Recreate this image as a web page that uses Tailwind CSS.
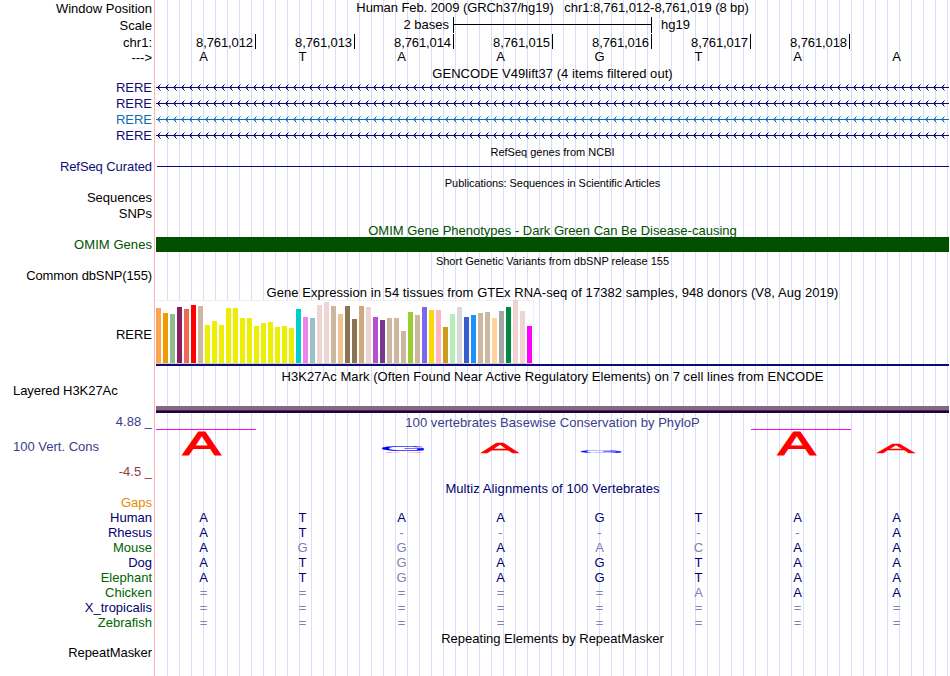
<!DOCTYPE html>
<html lang="en">
<head>
  <meta charset="UTF-8" />
  <meta name="viewport" content="width=device-width, initial-scale=1.0" />
  <title>Genome Browser - chr1:8,761,012-8,761,019</title>
  <script src="https://cdn.jsdelivr.net/npm/@tailwindcss/browser@4"></script>
</head>
<body class="bg-white text-black w-[950px] h-[676px] overflow-hidden font-['Liberation_Sans',Arial,sans-serif] text-[13px] leading-[15px]">
  <div class="flex h-full">

    <!-- Labels -->
    <div class="w-[155px] shrink-0 border-r border-[#ffb4b4] pr-[2px] flex flex-col text-right">
      <div class="h-[17px] pt-px">Window Position</div>
      <div class="h-[17px] pt-px">Scale</div>
      <div class="h-4 pt-px">chr1:</div>
      <div class="h-[30px]">---&gt;</div>
      <div class="h-4 text-[#0c0c78]">RERE</div>
      <div class="h-4 text-[#0c0c78]">RERE</div>
      <div class="h-4 text-[#0c6cb4]">RERE</div>
      <div class="h-[31px] text-[#0c0c78]">RERE</div>
      <div class="h-[31px] text-[#0c0c78] tracking-[-0.08px]">RefSeq Curated</div>
      <div class="h-4">Sequences</div>
      <div class="h-[31px]">SNPs</div>
      <div class="h-[31px] text-[#005000] tracking-[0.06px]">OMIM Genes</div>
      <div class="h-8 tracking-[-0.12px]">Common dbSNP(155)</div>
      <div class="h-[83px] pt-[27px]">RERE</div>
      <div class="h-[31px] pl-[13px] text-left tracking-[-0.06px]">Layered H3K27Ac</div>
      <div class="h-[25px] text-[#3c3c8c]">4.88 _</div>
      <div class="h-[25px] pl-[13px] text-left text-[#3c3c8c]">100 Vert. Cons</div>
      <div class="h-[31px] text-[#8c3c3c]">-4.5 _</div>
      <div class="h-[15px] text-[#e68a00]">Gaps</div>
      <div class="h-[15px] text-[#00006e]">Human</div>
      <div class="h-[15px] text-[#00006e]">Rhesus</div>
      <div class="h-[15px] text-[#006400]">Mouse</div>
      <div class="h-[15px] text-[#00006e]">Dog</div>
      <div class="h-[15px] text-[#006400]">Elephant</div>
      <div class="h-[15px] text-[#006400]">Chicken</div>
      <div class="h-[15px] text-[#00006e]">X_tropicalis</div>
      <div class="h-[30px] text-[#006400]">Zebrafish</div>
      <div class="h-[15px] tracking-[-0.06px]">RepeatMasker</div>
    </div>

    <!-- Tracks -->
    <div class="ml-px w-[793px] flex flex-col text-center bg-[repeating-linear-gradient(to_right,transparent_0px,transparent_11px,#dcdcfa_11px,#dcdcfa_12px)]">
      <div class="h-[17px] whitespace-pre tracking-[-0.07px]">Human Feb. 2009 (GRCh37/hg19)   chr1:8,761,012-8,761,019 (8 bp)</div>

      <div class="h-[17px] w-[792px] grid grid-cols-8">
        <div class="col-span-3 text-right pr-1">2 bases</div>
        <div class="col-span-2 h-4 border-l border-black pt-[7px]"><div class="h-px bg-black"></div></div>
        <div class="col-span-3 h-4 border-l border-black pl-[9px] text-left">hg19</div>
      </div>

      <div class="h-4 w-[792px] grid grid-cols-8 text-right tracking-[-0.1px] *:h-[15px] *:pr-[2px] *:pt-px">
        <div>8,761,012</div>
        <div class="border-l border-black">8,761,013</div>
        <div class="border-l border-black">8,761,014</div>
        <div class="border-l border-black">8,761,015</div>
        <div class="border-l border-black">8,761,016</div>
        <div class="border-l border-black">8,761,017</div>
        <div class="border-l border-black">8,761,018</div>
        <div class="border-l border-black"></div>
      </div>

      <div class="h-4 w-[792px] grid grid-cols-8 *:pr-1 leading-[14px]">
        <div>A</div><div>T</div><div>A</div><div>A</div><div>G</div><div>T</div><div>A</div><div>A</div>
      </div>

      <div class="h-[14px] tracking-[0.05px]">GENCODE V49lift37 (4 items filtered out)</div>
      <svg class="block w-[793px] h-16" viewBox="0 0 793 64" shape-rendering="crispEdges">
        <defs>
          <pattern id="navyArrows" width="8" height="16" patternUnits="userSpaceOnUse">
            <path d="M0 7h8v1H0zM2 6h1v3H2zM3 5h1v1H3zM3 9h1v1H3z" fill="#0c0c78" />
            <path d="M4 4h1v1H4zM4 10h1v1H4zM3 6h1v1H3zM3 8h1v1H3z" fill="#0c0c78" fill-opacity=".5" />
          </pattern>
          <pattern id="blueArrows" width="8" height="16" patternUnits="userSpaceOnUse">
            <path d="M0 7h8v1H0zM2 6h1v3H2zM3 5h1v1H3zM3 9h1v1H3z" fill="#0c6cb4" />
            <path d="M4 4h1v1H4zM4 10h1v1H4zM3 6h1v1H3zM3 8h1v1H3z" fill="#0c6cb4" fill-opacity=".5" />
          </pattern>
        </defs>
        <rect width="793" height="32" fill="url(#navyArrows)" />
        <rect y="32" width="793" height="16" fill="url(#blueArrows)" />
        <rect y="48" width="793" height="16" fill="url(#navyArrows)" />
      </svg>

      <div class="h-[22px] pt-px text-[11px]">RefSeq genes from NCBI</div>
      <div class="h-px ml-px bg-[#0c0c78]"></div>
      <div class="h-[56px] pt-[9px] text-[11px] tracking-[-0.05px]">Publications: Sequences in Scientific Articles</div>
      <div class="h-[14px] text-[#005000]">OMIM Gene Phenotypes - Dark Green Can Be Disease-causing</div>
      <div class="h-[15px] bg-[#005000]"></div>
      <div class="h-[33px] pt-[2px] text-[11px]">Short Genetic Variants from dbSNP release 155</div>
      <div class="h-[15px] tracking-[0.05px]">Gene Expression in 54 tissues from GTEx RNA-seq of 17382 samples, 948 donors (V8, Aug 2019)</div>

      <div class="h-16 w-[378px] bg-white border border-l-0 border-[#f0f0f0] border-b-[#d0d0c8]">
        <div id="gtex" class="-mt-px h-[63px] flex items-end gap-[2px]"></div>
      </div>
      <div class="h-[2px] bg-[#0c0c78]"></div>

      <div class="h-10 pt-[3px] tracking-[0.05px]">H3K27Ac Mark (Often Found Near Active Regulatory Elements) on 7 cell lines from ENCODE</div>
      <div class="h-[7px] shrink-0 bg-[#836a83] border-b-2 border-[#140a32] pt-1"><div class="h-px bg-[#64146e]"></div></div>

      <div class="h-4 pt-[2px] text-[#3c3c8c] tracking-[0.05px]">100 vertebrates Basewise Conservation by PhyloP</div>
      <!-- letter heights follow the conservation score -->
      <svg class="block w-[793px] h-[52px] text-[100px] leading-none overflow-visible" viewBox="0 0 793 52" text-anchor="middle">
        <path d="M0 .5h100M595 .5h100" stroke="#ff00ff" />
        <g fill="#ff0000" stroke="#ff0000" stroke-width="3">
          <text transform="translate(45.7 25.5) scale(.57 .335)">A</text>
          <text transform="translate(344 24.3) scale(.56 .145)">A</text>
          <text transform="translate(640.7 25.5) scale(.57 .335)">A</text>
          <text transform="translate(740 23.5) scale(.56 .13)">A</text>
        </g>
        <text transform="translate(248 24) scale(.61 .025)" fill="#ff0000">A</text>
        <text transform="translate(247.5 22) scale(.62 .07)" fill="#0000ff" stroke="#0000ff" stroke-width="2">G</text>
        <text transform="translate(445.5 24) scale(.62 .04)" fill="#0000ff">G</text>
      </svg>

      <div class="h-[29px] text-[#00006e] tracking-[0.09px]">Multiz Alignments of 100 Vertebrates</div>
      <div id="multiz" class="w-[792px] grid grid-cols-8 *:pr-1 *:h-[15px]"></div>
      <div class="pt-px">Repeating Elements by RepeatMasker</div>
    </div>
  </div>

  <script>
    const tan = '#cdb79e', yellow = '#eeee00', pink = '#eed5d2', brown = '#8b7355';
    // [height, color] per tissue
    const tissues = [
      [55, '#ffa54f'], [50, '#ee9a00'], [49, '#8fbc8f'], [56, '#8b1c62'], [54, '#ee6a50'], [58, '#ff0000'], [57, tan],
      [38, yellow], [42, yellow], [38, yellow], [55, yellow], [55, yellow], [45, yellow], [45, yellow],
      [37, yellow], [40, yellow], [41, yellow], [36, yellow], [37, yellow], [35, yellow],
      [54, '#00cdcd'], [46, '#ee82ee'], [45, '#9ac0cd'], [58, pink], [61, pink], [57, tan], [49, '#eec591'],
      [57, brown], [44, brown], [57, '#cdaa7d'], [56, pink], [46, '#b452cd'], [43, '#7a378b'],
      [45, tan], [45, tan], [32, tan], [51, '#9acd32'], [48, tan], [56, '#7a67ee'], [53, '#ffd700'],
      [53, '#ffb6c1'], [36, '#cd9b1d'], [49, '#b4eeb4'], [56, '#d9d9d9'], [46, '#3a5fcd'], [48, '#1e90ff'],
      [50, tan], [51, tan], [45, '#ffd39b'], [52, '#a6a6a6'], [56, '#008b45'], [63, pink], [52, pink], [37, '#ff00ff']
    ];
    const gtex = document.getElementById('gtex');
    tissues.forEach(([height, color]) => {
      const bar = document.createElement('div');
      bar.className = 'w-[5px] shrink-0';
      bar.style.height = height + 'px';
      bar.style.background = color;
      gtex.appendChild(bar);
    });

    const human = 'ATAAGTAA';
    const rows = [human, 'AT-----A', 'AGGAACAA', 'ATGAGTAA', 'ATGAGTAA', '=====AAA', '========', '========'];
    const multiz = document.getElementById('multiz');
    rows.forEach(row => {
      [...row].forEach((base, i) => {
        const cell = document.createElement('div');
        cell.textContent = base;
        // bases that differ from human are dimmed
        cell.className = base === human[i] ? 'text-[#00006e]' : 'text-[#8080b8]';
        multiz.appendChild(cell);
      });
    });
  </script>
</body>
</html>
